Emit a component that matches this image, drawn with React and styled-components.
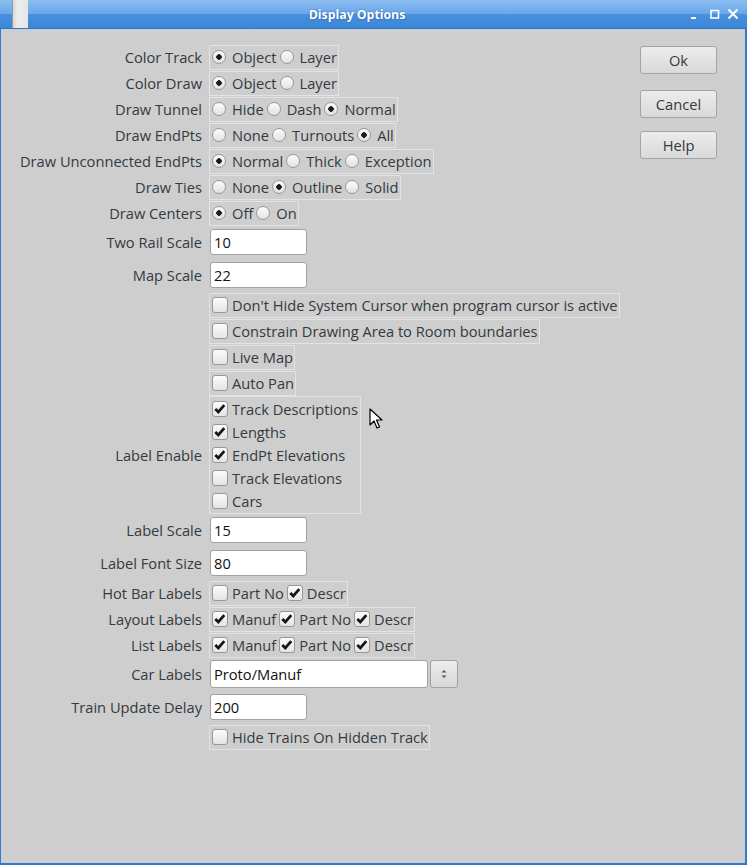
import React from 'react';
import styled, { createGlobalStyle } from 'styled-components';

const GlobalStyle = createGlobalStyle`
  html, body {
    margin: 0;
    padding: 0;
    background: #cecece;
  }
  body {
    font-family: "Open Sans", "Noto Sans", sans-serif;
    font-size: 14.67px;
    color: #343a40;
  }
`;

const ROWS = [
  { kind: 'radio', label: 'Color Track', items: ['Object', 'Layer'], on: 0 },
  { kind: 'radio', label: 'Color Draw', items: ['Object', 'Layer'], on: 0 },
  { kind: 'radio', label: 'Draw Tunnel', items: ['Hide', 'Dash', 'Normal'], on: 2 },
  { kind: 'radio', label: 'Draw EndPts', items: ['None', 'Turnouts', 'All'], on: 2 },
  { kind: 'radio', label: 'Draw Unconnected EndPts', items: ['Normal', 'Thick', 'Exception'], on: 0 },
  { kind: 'radio', label: 'Draw Ties', items: ['None', 'Outline', 'Solid'], on: 1 },
  { kind: 'radio', label: 'Draw Centers', items: ['Off', 'On'], on: 0 },
  { kind: 'entry', label: 'Two Rail Scale', value: '10' },
  { kind: 'entry', label: 'Map Scale', value: '22' },
  { kind: 'check', label: '', items: [["Don't Hide System Cursor when program cursor is active", false]] },
  { kind: 'check', label: '', items: [['Constrain Drawing Area to Room boundaries', false]] },
  { kind: 'check', label: '', items: [['Live Map', false]] },
  { kind: 'check', label: '', items: [['Auto Pan', false]] },
  {
    kind: 'stack',
    label: 'Label Enable',
    items: [
      ['Track Descriptions', true],
      ['Lengths', true],
      ['EndPt Elevations', true],
      ['Track Elevations', false],
      ['Cars', false],
    ],
  },
  { kind: 'entry', label: 'Label Scale', value: '15' },
  { kind: 'entry', label: 'Label Font Size', value: '80' },
  { kind: 'check', label: 'Hot Bar Labels', items: [['Part No', false], ['Descr', true]] },
  { kind: 'check', label: 'Layout Labels', items: [['Manuf', true], ['Part No', true], ['Descr', true]] },
  { kind: 'check', label: 'List Labels', items: [['Manuf', true], ['Part No', true], ['Descr', true]] },
  { kind: 'combo', label: 'Car Labels', value: 'Proto/Manuf' },
  { kind: 'entry', label: 'Train Update Delay', value: '200' },
  { kind: 'check', label: '', items: [['Hide Trains On Hidden Track', false]] },
];

const App = () => {
  return (
    <>
      <GlobalStyle />
      <Window>
        <TitleBar>
          <MenuHandle />
          <Title>Display Options</Title>
          <TitleButtons>
            <svg width="12" height="12" viewBox="0 0 12 12">
              <rect x="2" y="9" width="5" height="2" fill="#fff" />
            </svg>
            <svg width="12" height="12" viewBox="0 0 12 12">
              <rect x="2" y="2.5" width="7.5" height="7.5" fill="none" stroke="#fff" strokeWidth="1.6" />
            </svg>
            <svg width="12" height="12" viewBox="0 0 12 12">
              <path d="M1.5 1.5 L10.5 10.5 M10.5 1.5 L1.5 10.5" stroke="#fff" strokeWidth="2" />
            </svg>
          </TitleButtons>
        </TitleBar>
        <Body>
          <Form>
            {ROWS.map((row, i) => (
              <Row key={i} $kind={row.kind}>
                <Label>{row.label}</Label>
                {renderControl(row)}
              </Row>
            ))}
          </Form>
          <Buttons>
            <Button>Ok</Button>
            <Button $gap={16}>Cancel</Button>
            <Button $gap={13}>Help</Button>
          </Buttons>
          <Pointer width="14" height="22" viewBox="0 0 14 22">
            <path d="M1 1 L1 17 L5 13 L8 20 L10.5 19 L7.5 12 L13 12 Z" fill="#fff" stroke="#000" strokeWidth="1.2" strokeLinejoin="round" />
          </Pointer>
        </Body>
      </Window>
    </>
  );
};

const renderControl = (row) => {
  if (row.kind === 'radio') {
    return (
      <Group>
        {row.items.map((name, i) => (
          <Item key={name}>
            <Radio $on={i === row.on} />
            <span>{name}</span>
          </Item>
        ))}
      </Group>
    );
  }
  if (row.kind === 'check') {
    return (
      <Group>
        {row.items.map(([name, on]) => (
          <Item key={name} $check>
            <CheckBox on={on} />
            <span>{name}</span>
          </Item>
        ))}
      </Group>
    );
  }
  if (row.kind === 'stack') {
    return (
      <Group $stack>
        {row.items.map(([name, on]) => (
          <StackItem key={name}>
            <CheckBox on={on} />
            <span>{name}</span>
          </StackItem>
        ))}
      </Group>
    );
  }
  if (row.kind === 'combo') {
    return (
      <Combo>
        <Entry $wide>{row.value}</Entry>
        <Spin>
          <svg width="8" height="12" viewBox="0 0 8 12">
            <path d="M1.5 4.5 L4 2 L6.5 4.5 Z" fill="#555" />
            <path d="M1.5 7.5 L4 10 L6.5 7.5 Z" fill="#555" />
          </svg>
        </Spin>
      </Combo>
    );
  }
  return <Entry>{row.value}</Entry>;
};

const CheckBox = ({ on }) => (
  <Box>
    {on && (
      <svg width="14" height="14" viewBox="0 0 14 14">
        <path d="M2.3 7 L5.3 10 L11.3 3.2" fill="none" stroke="#151515" strokeWidth="2.7" />
      </svg>
    )}
  </Box>
);

export default App;

const Window = styled.div`
  width: 747px;
  height: 865px;
  display: flex;
  flex-direction: column;
  background: #cecece;
`;

const TitleBar = styled.div`
  height: 29px;
  flex-shrink: 0;
  display: flex;
  align-items: stretch;
  background: linear-gradient(#8cbdf0 0%, #6aa7ea 48%, #4790dd 52%, #3a88d8 100%);
  border-bottom: 1px solid #2e74c6;
  box-sizing: border-box;
  padding-left: 12px;
`;

const MenuHandle = styled.div`
  width: 15px;
  background: linear-gradient(90deg, #d6d6d6, #ececec 30%, #e6e6e6);
  border-left: 1px solid #9a9a9a;
`;

const Title = styled.div`
  flex: 1;
  text-align: center;
  color: #fff;
  font-weight: bold;
  font-size: 12.3px;
  line-height: 30px;
  padding-right: 3px;
  text-shadow: 0 0 2px rgba(0, 40, 100, 0.5);
`;

const TitleButtons = styled.div`
  display: flex;
  align-items: center;
  gap: 6px;
  padding: 0 8px 0 0;

  svg:first-child {
    margin-right: 2px;
  }
`;

const Body = styled.div`
  flex: 1;
  position: relative;
  display: flex;
  border: solid #2f79d0;
  border-width: 0 2px 2px 1px;
  padding-top: 15px;
`;

const Form = styled.div`
  display: flex;
  flex-direction: column;
  width: 630px;
`;

const Row = styled.div`
  display: flex;
  align-items: center;
  gap: 7px;
  height: ${(p) => (p.$kind === 'entry' || p.$kind === 'combo' ? '33px' : p.$kind === 'stack' ? 'auto' : '26px')};
  padding: ${(p) => (p.$kind === 'entry' ? '3px 0 4px' : p.$kind === 'combo' ? '2px 0 3px' : '0')};
  box-sizing: border-box;
`;

const Label = styled.div`
  width: 201px;
  flex-shrink: 0;
  text-align: right;
  white-space: nowrap;
`;

const Group = styled.div`
  display: flex;
  flex-direction: ${(p) => (p.$stack ? 'column' : 'row')};
  align-items: ${(p) => (p.$stack ? 'flex-start' : 'center')};
  height: ${(p) => (p.$stack ? 'auto' : '25px')};
  padding: ${(p) => (p.$stack ? '0 2px 1px 2px' : '0 1px 0 2px')};
  border: 1px solid #e3e3e3;
  box-sizing: border-box;
  white-space: nowrap;
`;

const Item = styled.label`
  display: flex;
  align-items: center;
  gap: ${(p) => (p.$check ? '4px' : '6px')};
  margin-right: 3px;
  line-height: 20px;

  &:last-child {
    margin-right: 0;
  }
`;

const StackItem = styled.label`
  display: flex;
  align-items: center;
  gap: 4px;
  height: 23px;
`;

const Radio = styled.span`
  width: 14px;
  height: 14px;
  border-radius: 50%;
  box-sizing: border-box;
  border: 1px solid #979797;
  background: radial-gradient(circle, #1c1c1c 0 2.5px, transparent 3px),
    linear-gradient(#fcfcfc, #e2e2e2);
  background-size: ${(p) => (p.$on ? 'auto' : '0 0, auto')};
  background-repeat: no-repeat;
  flex-shrink: 0;
`;

const Box = styled.span`
  width: 16px;
  height: 16px;
  box-sizing: border-box;
  border: 1px solid #979797;
  border-radius: 3px;
  background: linear-gradient(#fbfbfb, #e4e4e4);
  display: flex;
  align-items: center;
  justify-content: center;
  flex-shrink: 0;
`;

const Entry = styled.div`
  width: ${(p) => (p.$wide ? '218px' : '97px')};
  height: ${(p) => (p.$wide ? '28px' : '26px')};
  margin-left: 1px;
  box-sizing: border-box;
  background: #fff;
  border: 1px solid #a2a2a2;
  border-radius: 3px;
  padding-left: 3px;
  display: flex;
  align-items: center;
  color: #111;
`;

const Combo = styled.div`
  display: flex;
  gap: 2px;
`;

const Spin = styled.div`
  width: 28px;
  height: 28px;
  box-sizing: border-box;
  border: 1px solid #a2a2a2;
  border-radius: 3px;
  background: linear-gradient(#ececec, #d8d8d8);
  display: flex;
  align-items: center;
  justify-content: center;
`;

const Buttons = styled.div`
  display: flex;
  flex-direction: column;
  padding-top: 2px;
  margin-left: 9px;
`;

const Button = styled.div`
  width: 77px;
  height: 28px;
  margin-top: ${(p) => p.$gap || 0}px;
  box-sizing: border-box;
  border: 1px solid #a4a4a4;
  border-radius: 3px;
  background: linear-gradient(#ececec, #d9d9d9);
  display: flex;
  align-items: center;
  justify-content: center;
  color: #343a40;
`;

const Pointer = styled.svg`
  position: absolute;
  left: 368px;
  top: 379px;
`;
